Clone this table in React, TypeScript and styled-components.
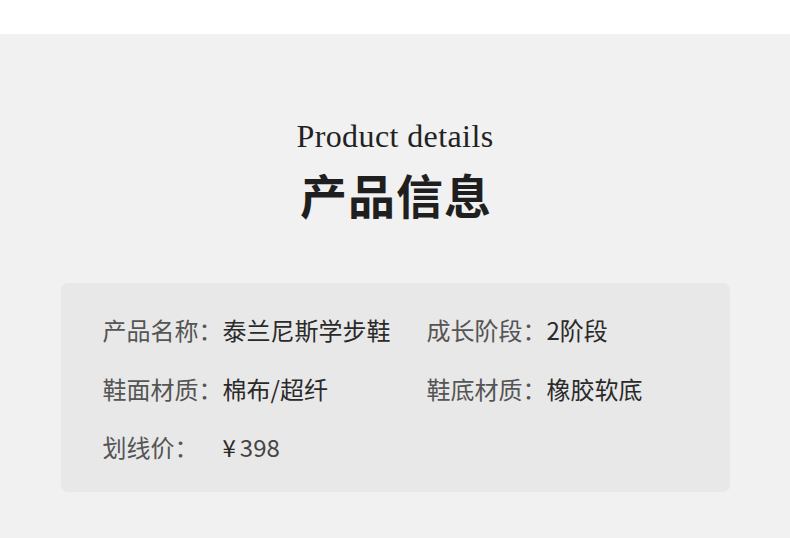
import React from "react";
import styled, { createGlobalStyle } from "styled-components";

const Global = createGlobalStyle`
  html, body { margin: 0; padding: 0; background: #ffffff; }
  body { font-family: "Noto Sans CJK SC", "Noto Sans", sans-serif; }
`;

const Page = styled.div`
  width: 790px;
  height: 538px;
  padding-top: 34px;
  box-sizing: border-box;
  background: #ffffff;
`;

const Section = styled.section`
  height: 504px;
  background: #f1f1f1;
  display: flex;
  flex-direction: column;
  align-items: center;
  padding-top: 84px;
  box-sizing: border-box;
`;

const Subtitle = styled.div`
  font-family: "Liberation Serif", "DejaVu Serif", serif;
  font-size: 32px;
  line-height: 36px;
  letter-spacing: 0.4px;
  color: #222222;
`;

const Title = styled.h1`
  margin: 12px 0 0 2px;
  font-family: "Noto Sans CJK SC", sans-serif;
  font-weight: 700;
  font-size: 47px;
  line-height: 56px;
  letter-spacing: 1px;
  color: #1f1f1f;
`;

const Card = styled.div`
  margin-top: 61px;
  width: 669px;
  height: 209px;
  box-sizing: border-box;
  background: #e8e8e8;
  border-radius: 7px;
  padding: 29px 0 0 42px;
  display: grid;
  grid-template-columns: 324px 1fr;
  grid-auto-rows: 58.5px;
  align-content: start;
`;

const Item = styled.div`
  display: flex;
  align-items: center;
  height: 36px;
  font-size: 24px;
  line-height: 36px;
  white-space: nowrap;
`;

const Label = styled.span`
  width: 120px;
  flex: none;
  color: #555555;
`;

const Value = styled.span`
  color: #2a2a2a;
`;

const Price = styled.span`
  color: #444444;
`;

const Currency = styled.span`
  color: #2a2a2a;
  margin-right: 4px;
`;

export default function App() {
  return (
    <>
      <Global />
      <Page>
        <Section>
          <Subtitle>Product details</Subtitle>
          <Title>产品信息</Title>
          <Card>
            <Item>
              <Label>产品名称：</Label>
              <Value>泰兰尼斯学步鞋</Value>
            </Item>
            <Item>
              <Label>成长阶段：</Label>
              <Value>2阶段</Value>
            </Item>
            <Item>
              <Label>鞋面材质：</Label>
              <Value>棉布/超纤</Value>
            </Item>
            <Item>
              <Label>鞋底材质：</Label>
              <Value>橡胶软底</Value>
            </Item>
            <Item>
              <Label>划线价：</Label>
              <Currency>¥</Currency>
              <Price>398</Price>
            </Item>
          </Card>
        </Section>
      </Page>
    </>
  );
}
